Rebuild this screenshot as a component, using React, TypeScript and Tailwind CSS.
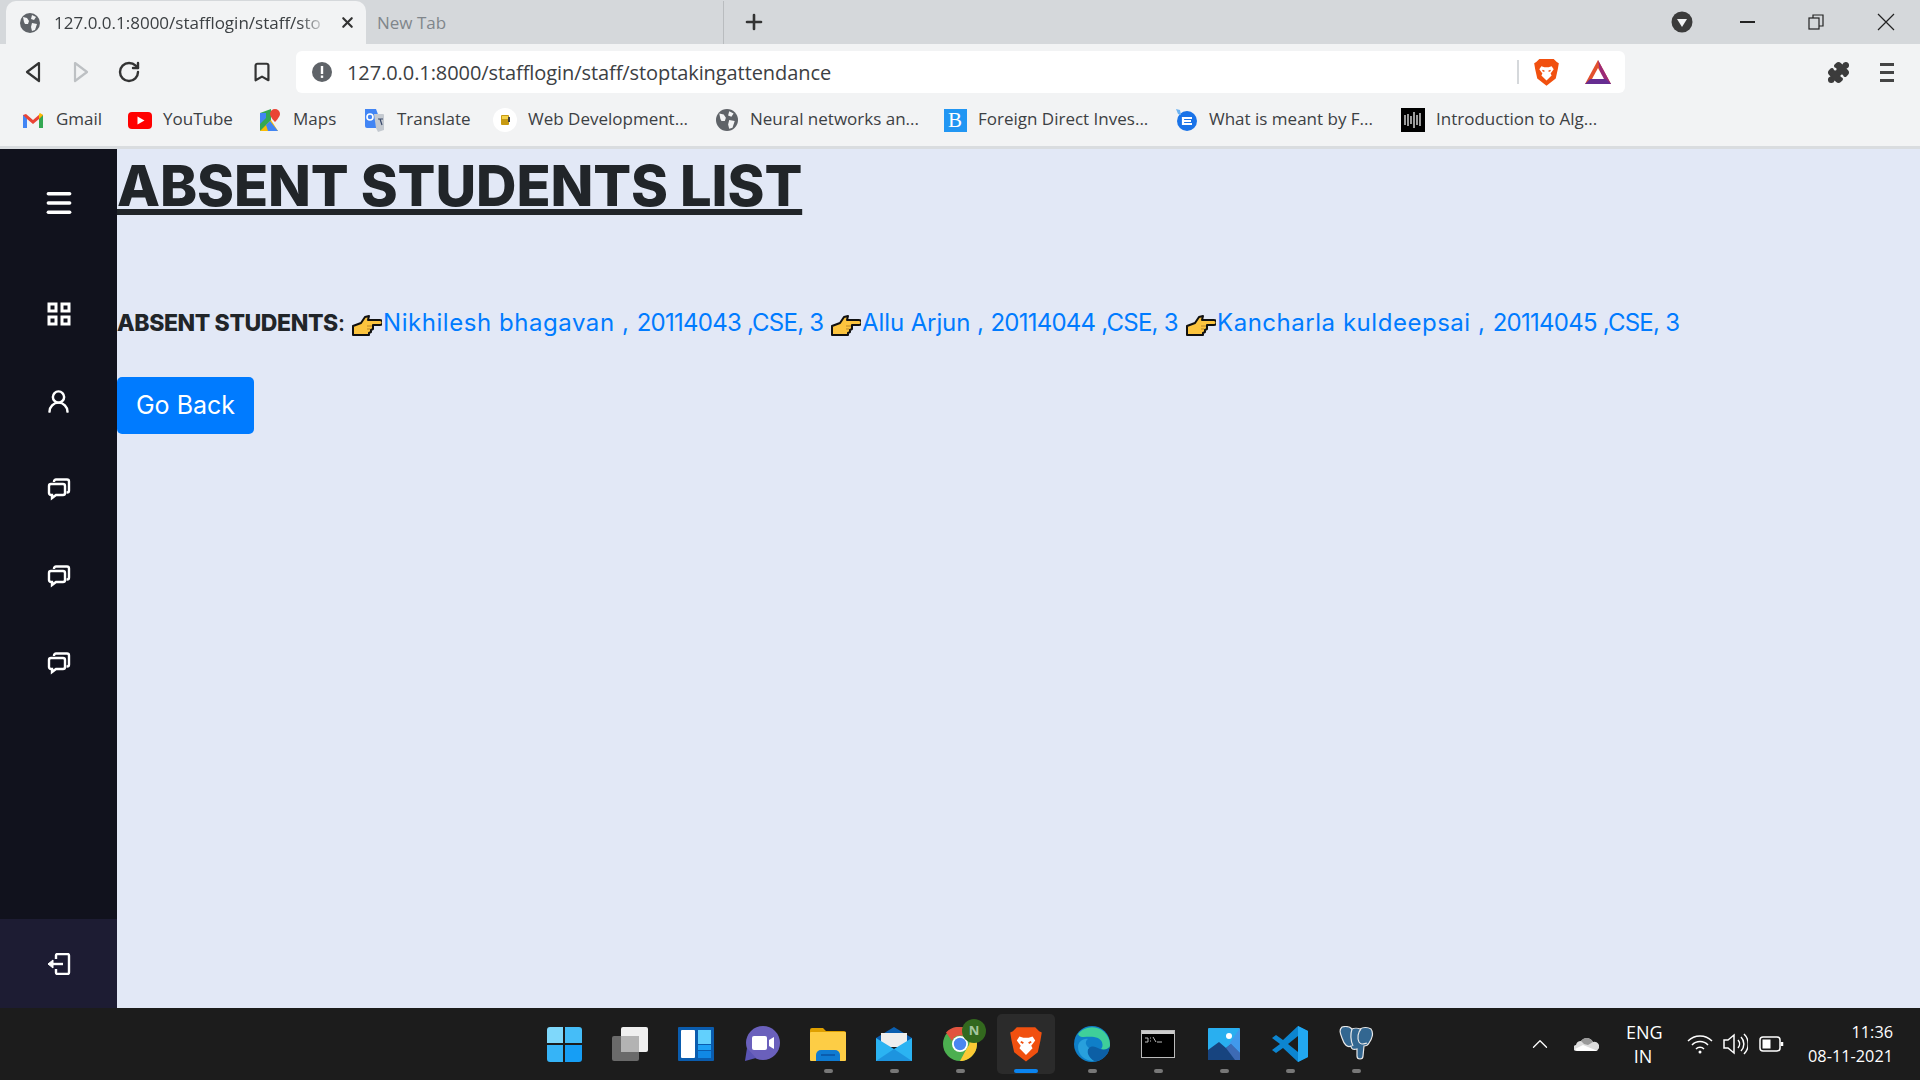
import { Menu, UserRound, ChevronUp, Plus, X, RotateCw, Bookmark, Puzzle } from 'lucide-react';

const uiFont = "font-['Open_Sans','Noto_Sans',sans-serif]";
const pageFont = "font-['Inter','Liberation_Sans',sans-serif]";

function Globe({ size = 20, color = '#5f6368' }: { size?: number; color?: string }) {
  return (
    <svg width={size} height={size} viewBox="0 0 20 20">
      <circle cx="10" cy="10" r="10" fill={color} />
      <path d="M3 4l4 1 2 3-1 3-3 0-1-2zM12 2l4 2-2 3-3-1zM12 10l5 1-2 6-3 1-1-4z" fill="#f2f3f4" />
    </svg>
  );
}

function Chats() {
  return (
    <svg width="24" height="24" viewBox="0 0 24 24" fill="none" stroke="#fff" strokeWidth="2.400">
      <path d="M7 5V4.500A2 2 0 0 1 9 2.500h11a2 2 0 0 1 2 2v9a2 2 0 0 1-2 2h-.5" />
      <path d="M4 7h12a2 2 0 0 1 2 2v7a2 2 0 0 1-2 2H9l-4 3v-3H4a2 2 0 0 1-2-2V9a2 2 0 0 1 2-2z" />
    </svg>
  );
}

function Hand() {
  return (
    <svg width="30" height="22" viewBox="0 0 30 22" className="block">
      <path
        d="M1 12l8-3 4-6 4-1-1 4h12a2.500 2.500 0 0 1 0 5h-7v4l-2 1v2l-2 1v2H1z"
        fill="#fcc43e"
        stroke="#111"
        strokeWidth="2"
        strokeLinejoin="round"
      />
      <path d="M15 12h5M15 15h3" stroke="#b8862a" strokeWidth="1" />
    </svg>
  );
}

function BraveLion({ size = 24 }: { size?: number }) {
  return (
    <svg width={size} height={size * 1.15} viewBox="0 0 24 28">
      <path d="M5 1h14l3 3 2 1-1 6-2 9-9 7-9-7-2-9-1-6 2-1z" fill="#f1500f" />
      <path d="M7 8l3 1h4l3-1 2 3-3 4 1 2-5 5-5-5 1-2-3-4z" fill="#fff" />
      <path d="M10 13l-2-1M14 13l2-1" stroke="#f1500f" strokeWidth="1.400" />
    </svg>
  );
}

function BookmarkItem({ icon, label, width }: { icon: React.ReactNode; label: string; width: string }) {
  return (
    <div className={`flex shrink-0 items-center ${width}`}>
      <div className="flex w-[24px] shrink-0 justify-center">{icon}</div>
      <span className="mt-[-2px] ml-[11px] text-[17px] whitespace-nowrap text-[#3c4043]">{label}</span>
    </div>
  );
}

const bookmarks = [
  {
    label: 'Gmail',
    width: 'w-[107px]',
    icon: (
      <svg width="22" height="17" viewBox="0 0 22 17">
        <path d="M1 16V3l3-1 7 6 7-6 3 1v13h-4V7l-6 5-6-5v9z" fill="#ea4335" />
        <path d="M1 3v13h4V7z" fill="#4285f4" />
        <path d="M21 3v13h-4V7z" fill="#34a853" />
        <path d="M17 7V2l1-1 3 2z" fill="#fbbc04" />
      </svg>
    ),
  },
  {
    label: 'YouTube',
    width: 'w-[130px]',
    icon: (
      <svg width="24" height="17" viewBox="0 0 24 17">
        <rect width="24" height="17" rx="4" fill="#f00" />
        <path d="M9.500 4.500v8l7-4z" fill="#fff" />
      </svg>
    ),
  },
  {
    label: 'Maps',
    width: 'w-[104px]',
    icon: (
      <svg width="22" height="24" viewBox="0 0 22 24">
        <path d="M1 5l11-4v19L1 23z" fill="#34a853" />
        <path d="M1 23l11-11 7 11z" fill="#fbbc04" />
        <path d="M1 5h6v5l-6 6z" fill="#4285f4" />
        <path d="M7 17l4-4 8 10H9z" fill="#4285f4" />
        <path d="M16 1a5 5 0 0 1 5 5c0 3-5 8-5 8s-5-5-5-8a5 5 0 0 1 5-5z" fill="#ea4335" />
      </svg>
    ),
  },
  {
    label: 'Translate',
    width: 'w-[131px]',
    icon: (
      <svg width="22" height="24" viewBox="0 0 22 24">
        <path d="M2 1h11l7 19H4a2 2 0 0 1-2-2z" fill="#4285f4" />
        <path d="M11 6h9a1 1 0 0 1 1 1v15l-6 2-2-4z" fill="#c4c9d0" />
        <circle cx="7" cy="9" r="3" fill="none" stroke="#fff" strokeWidth="1.600" />
        <path d="M15 11h5M17 11l2 6" stroke="#3a4a6b" strokeWidth="1.200" />
      </svg>
    ),
  },
  {
    label: 'Web Development...',
    width: 'w-[222px]',
    icon: (
      <svg width="24" height="24" viewBox="0 0 24 24">
        <circle cx="12" cy="12" r="12" fill="#fff" />
        <rect x="8" y="7" width="8" height="10" rx="1" fill="#c79a12" />
        <rect x="9" y="8" width="6" height="3" fill="#f5d24a" />
        <rect x="15" y="9" width="2" height="5" fill="#444" />
      </svg>
    ),
  },
  { label: 'Neural networks an...', width: 'w-[228px]', icon: <Globe size={22} /> },
  {
    label: 'Foreign Direct Inves...',
    width: 'w-[231px]',
    icon: (
      <div className="flex h-[23px] w-[23px] items-center justify-center bg-[#2196f3] font-['Liberation_Serif',serif] text-[21px] leading-none text-white">
        B
      </div>
    ),
  },
  {
    label: 'What is meant by F...',
    width: 'w-[227px]',
    icon: (
      <svg width="24" height="26" viewBox="0 0 24 26">
        <circle cx="13" cy="14" r="10" fill="#1a73e8" />
        <path d="M2 2l4 1 1 5-3-1z" fill="#6db3f2" />
        <path d="M18 11H9v6h9M9 14h8" fill="none" stroke="#fff" strokeWidth="2.200" />
      </svg>
    ),
  },
  {
    label: 'Introduction to Alg...',
    width: 'w-[220px]',
    icon: (
      <svg width="24" height="24" viewBox="0 0 24 24">
        <rect width="24" height="24" fill="#000" />
        <path d="M4 7v10M7 6v12M10 8v8M13 4v16M16 7v10M19 5v13" stroke="#ddd" strokeWidth="1.400" />
      </svg>
    ),
  },
];

function Chrome() {
  return (
    <div className={`${uiFont} shrink-0`}>
      {/* tab strip */}
      <div className="flex h-[44px] items-end bg-[#d5d8db] pl-[6px]">
        <div className="flex h-[43px] w-[360px] items-center rounded-t-[10px] bg-[#f2f3f4] pl-[14px]">
          <Globe size={20} />
          <span className="ml-[14px] w-[273px] overflow-hidden text-[17px] whitespace-nowrap text-[#3c4043] [mask-image:linear-gradient(to_right,black_90%,transparent)]">
            127.0.0.1:8000/stafflogin/staff/sto
          </span>
          <X size={17} strokeWidth={3} className="ml-[12px] text-[#333]" />
        </div>
        <div className="flex h-[43px] w-[358px] items-center border-r border-[#b9bcbf] pl-[11px] text-[17px] text-[#80868b]">
          New Tab
        </div>
        <Plus size={24} strokeWidth={2.600} className="mb-[10px] ml-[18px] text-[#333]" />
        <div className="ml-auto flex h-[44px] items-center self-start">
          <svg width="22" height="22" viewBox="0 0 22 22">
            <circle cx="11" cy="11" r="10.500" fill="#3b3b3b" />
            <path d="M6 8h10l-5 8z" fill="#f2f3f4" />
          </svg>
          <div className="ml-[47px] h-[2px] w-[15px] bg-[#222]" />
          <svg width="16" height="16" viewBox="0 0 16 16" fill="none" stroke="#222" strokeWidth="1.200" className="ml-[53px]">
            <rect x="1" y="4" width="10" height="11" />
            <path d="M5 4V1h10v11h-4" />
          </svg>
          <svg width="18" height="18" viewBox="0 0 18 18" stroke="#222" strokeWidth="1.200" className="mr-[25px] ml-[53px]">
            <path d="M1 1l16 16M17 1L1 17" />
          </svg>
        </div>
      </div>
      {/* toolbar */}
      <div className="flex h-[50px] items-center bg-[#f2f3f4] pt-[7px] pb-px">
        <svg width="18" height="22" viewBox="0 0 18 22" fill="none" stroke="#333" strokeWidth="2.200" strokeLinejoin="round" className="ml-[24px]">
          <path d="M15 2L3 11l12 9z" />
        </svg>
        <svg width="18" height="22" viewBox="0 0 18 22" fill="none" stroke="#bdc0c3" strokeWidth="2.200" strokeLinejoin="round" className="ml-[30px]">
          <path d="M3 2l12 9-12 9z" />
        </svg>
        <RotateCw size={24} strokeWidth={2.400} className="ml-[27px] text-[#333]" />
        <Bookmark size={22} strokeWidth={2.400} className="ml-[110px] text-[#333]" />
        <div className="ml-[23px] flex h-[42px] w-[1329px] items-center rounded-[6px] bg-white pl-[16px]">
          <svg width="20" height="20" viewBox="0 0 20 20">
            <circle cx="10" cy="10" r="10" fill="#5f6368" />
            <rect x="8.800" y="4" width="2.400" height="8" fill="#fff" />
            <rect x="8.800" y="13.500" width="2.400" height="2.400" fill="#fff" />
          </svg>
          <span className="mt-[2px] ml-[15px] text-[20px] tracking-[-0.08px] whitespace-nowrap text-[#3c4043]">
            127.0.0.1:8000/stafflogin/staff/stoptakingattendance
          </span>
          <div className="ml-auto flex items-center">
            <div className="h-[24px] w-[2px] bg-[#d5d8db]" />
            <div className="ml-[15px]">
              <BraveLion size={25} />
            </div>
            <svg width="28" height="24" viewBox="0 0 28 24" className="mr-[13px] ml-[25px]">
              <path d="M14 0l13 24H1z" fill="#e2502d" />
              <path d="M14 0l13 24h-9z" fill="#9b2a78" />
              <path d="M1 24l5-5h16l5 5z" fill="#662d91" />
              <path d="M14 8l6 11H8z" fill="#fff" />
            </svg>
          </div>
        </div>
        <Puzzle size={23} fill="#3c3c3c" className="ml-[202px] text-[#3c3c3c]" />
        <div className="ml-[30px] flex w-[14px] flex-col gap-[5px]">
          <div className="h-[3px] bg-[#444]" />
          <div className="h-[3px] bg-[#444]" />
          <div className="h-[3px] bg-[#444]" />
        </div>
      </div>
      {/* bookmarks bar */}
      <div className="flex h-[55px] items-center border-b-[3px] border-[#d9dcdf] bg-[#f2f3f4] pl-[21px]">
        {bookmarks.map((b) => (
          <BookmarkItem key={b.label} icon={b.icon} label={b.label} width={b.width} />
        ))}
      </div>
    </div>
  );
}

function Sidebar() {
  return (
    <div className="flex w-[117px] shrink-0 flex-col bg-[#11121d] text-white">
      <div className="flex flex-1 flex-col items-center pt-[38px]">
        <Menu size={32} strokeWidth={2.600} />
        <svg width="24" height="24" viewBox="0 0 24 24" fill="none" stroke="#fff" strokeWidth="3" className="mt-[83px]">
          <rect x="2" y="2" width="7" height="7" />
          <rect x="15" y="2" width="7" height="7" />
          <rect x="2" y="15" width="7" height="7" />
          <rect x="15" y="15" width="7" height="7" />
        </svg>
        <div className="mt-[62px]">
          <UserRound size={27} strokeWidth={2.200} />
        </div>
        <div className="mt-[62px] flex flex-col gap-[63px]">
          <Chats />
          <Chats />
          <Chats />
        </div>
      </div>
      <div className="flex h-[89px] items-center justify-center bg-[#1d1c33]">
        <svg width="24" height="22" viewBox="0 0 24 22" fill="none" stroke="#fff" strokeWidth="2.400">
          <path d="M9 6V2.500A1.500 1.500 0 0 1 10.500 1h10A1.500 1.500 0 0 1 22 2.500v17a1.500 1.500 0 0 1-1.500 1.500h-10A1.500 1.500 0 0 1 9 19.500V16" />
          <path d="M16 11H4" />
          <path d="M1 11l5-4v8z" fill="#fff" strokeWidth="1" />
        </svg>
      </div>
    </div>
  );
}

function Main() {
  return (
    <div className={`${pageFont} flex-1 bg-[#e2e8f6] text-[#212529]`}>
      <h1 className="mt-[2px] h-[67px] text-[56px] leading-[70px] font-extrabold tracking-[-0.1px] underline decoration-[6px] underline-offset-[3px]">
        ABSENT STUDENTS LIST
      </h1>
      <div className="mt-[87px] flex h-[36px] items-center text-[24px] whitespace-nowrap">
        <b className="w-[227px] text-[23px] font-extrabold tracking-[-0.4px]">
          ABSENT STUDENTS<span className="font-medium">:</span>
        </b>
        <span className="ml-[8px] flex items-center text-[#007bff]">
          <span className="mt-[4px]"><Hand /></span>
          <span className="ml-[1px] w-[442px]">
            <span className="tracking-[0.55px]">Nikhilesh bhagavan , </span>
            <span className="tracking-[-0.75px]">20114043 ,CSE, 3</span>
          </span>
          <span className="mt-[4px] ml-[6px]"><Hand /></span>
          <span className="ml-[1px] w-[314px]">
            <span className="tracking-[-0.1px]">Allu Arjun , </span>
            <span className="tracking-[-0.75px]">20114044 ,CSE, 3</span>
          </span>
          <span className="mt-[4px] ml-[10px]"><Hand /></span>
          <span className="ml-[1px]">
            <span className="tracking-[0.53px]">Kancharla kuldeepsai , </span>
            <span className="tracking-[-0.75px]">20114045 ,CSE, 3</span>
          </span>
        </span>
      </div>
      <button className="mt-[36px] h-[57px] w-[137px] rounded-[5px] bg-[#007bff] text-[25px] text-white">Go Back</button>
    </div>
  );
}

function Dot({ active }: { active?: boolean }) {
  return <div className={active ? 'h-[4px] w-[24px] rounded-full bg-[#0a84f0]' : 'h-[4px] w-[9px] rounded-full bg-[#777]'} />;
}

const taskIcons: { dot?: boolean; active?: boolean; icon: React.ReactNode }[] = [
  {
    icon: (
      <div className="grid h-[35px] w-[35px] grid-cols-2 gap-[2px]">
        <div className="rounded-tl-[3px] bg-[#7fd8fb]" />
        <div className="rounded-tr-[3px] bg-[#45bdf8]" />
        <div className="rounded-bl-[3px] bg-[#36b4f7]" />
        <div className="rounded-br-[3px] bg-[#169ef5]" />
      </div>
    ),
  },
  {
    icon: (
      <svg width="36" height="34" viewBox="0 0 36 34">
        <rect x="9" y="0" width="27" height="25" rx="2" fill="#efefef" />
        <rect x="0" y="9" width="27" height="25" rx="2" fill="#6a6a6a" />
        <rect x="9" y="9" width="18" height="16" fill="#b3b3b3" />
      </svg>
    ),
  },
  {
    icon: (
      <svg width="36" height="34" viewBox="0 0 36 34">
        <rect width="36" height="34" rx="1" fill="#0a5cae" />
        <rect x="3" y="3" width="14" height="28" rx="1" fill="#fff" />
        <rect x="20" y="3" width="13" height="14" fill="#62d0fd" />
        <rect x="20" y="18" width="13" height="5" fill="#1da1f5" />
        <rect x="20" y="24" width="13" height="7" fill="#1088e5" />
      </svg>
    ),
  },
  {
    icon: (
      <svg width="36" height="36" viewBox="0 0 36 36">
        <circle cx="19" cy="17" r="17" fill="#6a60bc" />
        <path d="M3 22l-2 13 11-3z" fill="#5a54b4" />
        <rect x="8" y="10" width="15" height="14" rx="2" fill="#fff" />
        <path d="M25 14l5-3v12l-5-3z" fill="#fff" />
      </svg>
    ),
  },
  {
    dot: true,
    icon: (
      <svg width="36" height="33" viewBox="0 0 36 33">
        <path d="M0 2a2 2 0 0 1 2-2h11l3 3h18a2 2 0 0 1 2 2v6H0z" fill="#dfa000" />
        <rect y="4" width="36" height="29" rx="1" fill="#fdcd45" />
        <path d="M6 33v-6a5 5 0 0 1 5-5h14a5 5 0 0 1 5 5v6z" fill="#0f7bd2" />
        <rect x="11" y="26" width="14" height="2" fill="#0a5cae" />
      </svg>
    ),
  },
  {
    dot: true,
    icon: (
      <svg width="36" height="34" viewBox="0 0 36 34">
        <path d="M0 11L18 0l18 11v5H0z" fill="#0b5fb0" />
        <path d="M5 6h26v14H5z" fill="#eee" />
        <path d="M0 11l18 11 18-11v23H0z" fill="#2bb3f2" />
        <path d="M36 34H0l18-12 18 12z" fill="#1d94df" />
      </svg>
    ),
  },
  {
    dot: true,
    icon: (
      <div className="relative">
        <svg width="34" height="34" viewBox="0 0 34 34">
          <circle cx="17" cy="17" r="17" fill="#4caf50" />
          <path d="M17 0a17 17 0 0 1 14.700 8.500H17a8.500 8.500 0 0 0-8 5.500L3 5.500A17 17 0 0 1 17 0z" fill="#e2533f" />
          <path d="M31.700 8.500A17 17 0 0 1 17 34l7-13a8.500 8.500 0 0 0 0-12.500z" fill="#fcc934" />
          <circle cx="17" cy="17" r="8" fill="#fff" />
          <circle cx="17" cy="17" r="6.200" fill="#4a86f0" />
        </svg>
        <div className="absolute top-[-8px] left-[19px] flex h-[24px] w-[24px] items-center justify-center rounded-full bg-[#33691e] text-[13px] font-bold text-[#a7c7a0]">
          N
        </div>
      </div>
    ),
  },
  { active: true, icon: <BraveLion size={32} /> },
  {
    dot: true,
    icon: (
      <svg width="36" height="36" viewBox="0 0 36 36">
        <circle cx="18" cy="18" r="18" fill="#0f7fc8" />
        <path d="M4 8A18 18 0 0 1 36 19c0 4-5 6-9 4 3-3 2-11-7-12C12 10 6 13 4 8z" fill="#3fcf9a" />
        <path d="M36 19c0 3-5 6-10 4-5-2-7-4-11-1-3 3-1 9 5 13 4 1 10-2 14-8z" fill="#0c5fa5" />
        <path d="M15 22c-3 3-1 9 5 13-9 0-16-6-16-14 0-5 5-9 10-8-3 2-3 6 1 9z" fill="#28a0dc" />
      </svg>
    ),
  },
  {
    dot: true,
    icon: (
      <svg width="34" height="28" viewBox="0 0 34 28">
        <rect x="0.500" y="0.500" width="33" height="27" fill="#000" stroke="#bbb" />
        <rect x="1" y="1" width="32" height="3" fill="#ccc" />
        <path d="M4 8h3v4H4M9 8h1M9 11h1M12 7l3 5M16 12h5" stroke="#bbb" strokeWidth="1" fill="none" />
      </svg>
    ),
  },
  {
    dot: true,
    icon: (
      <svg width="32" height="32" viewBox="0 0 32 32">
        <rect width="32" height="32" rx="1" fill="#29aff0" />
        <path d="M32 32H0V22l11-8 7 6 5-4 9 9z" fill="#17447f" />
        <path d="M18 20l5-4 9 9v7h-5z" fill="#3d6bb5" />
        <circle cx="21" cy="8" r="3" fill="#fff" />
        <path d="M32 0v25l-9-9-3 2z" fill="#5a84e6" opacity=".5" />
      </svg>
    ),
  },
  {
    dot: true,
    icon: (
      <svg width="36" height="36" viewBox="0 0 36 36">
        <path d="M26 0l10 5v26l-10 5-15-14-7 5-4-3 8-6-8-6 4-3 7 5z" fill="#0c85d0" />
        <path d="M26 0l10 5v26l-10 5z" fill="#22a8f2" />
        <path d="M26 10v16l-10-8z" fill="#1c1c1c" />
      </svg>
    ),
  },
  {
    dot: true,
    icon: (
      <svg width="36" height="36" viewBox="0 0 36 36" stroke="#e8e8e8" strokeWidth="1.200">
        <path d="M4 1c4-1 8 0 10 2 2-1 6-1 8 0 3-2 8-2 11 0 3 4 1 10-2 14-1 2-3 3-5 3l-1 10c0 4-6 4-6 0v-7c-4 1-6 0-6-3-4 2-7-2-9-8C2 7 1 4 4 1z" fill="#336791" />
        <path d="M14 3c-2 6-2 10 1 17M23 3c-3 3-4 9-2 13 2 3 4 2 8 1" fill="none" />
      </svg>
    ),
  },
];

function Taskbar() {
  return (
    <div className={`${uiFont} relative flex h-[72px] shrink-0 items-center bg-[#1c1c1c] text-white`}>
      <div className="ml-[531px] flex">
        {taskIcons.map((t, i) => (
          <div key={i} className="relative flex h-[60px] w-[66px] items-center justify-center">
            <div className={`flex h-[60px] w-[58px] items-center justify-center rounded-[5px] ${t.active ? 'bg-[#2b2b2b]' : ''}`}>
              {t.icon}
            </div>
            <div className="absolute bottom-[1px]">{(t.dot || t.active) && <Dot active={t.active} />}</div>
          </div>
        ))}
      </div>
      <div className="ml-auto flex items-center pr-[27px]">
        <ChevronUp size={26} strokeWidth={1.200} />
        <svg width="25" height="16" viewBox="0 0 25 16" className="ml-[21px]">
          <path d="M3 15a3 3 0 0 1-1-6 5 5 0 0 1 5-4 7 7 0 0 1 12 1 4.500 4.500 0 0 1 3 9z" fill="#ddd" />
          <path d="M1 13l8-4 5 2 10 4H3z" fill="#fff" />
          <path d="M7 5a7 7 0 0 1 12 1l-5 3-4-1z" fill="#999" />
        </svg>
        <div className="ml-[27px] w-[34px] text-center text-[18px] leading-[24px]">
          ENG
          <br />
          IN
        </div>
        <svg width="26" height="20" viewBox="0 0 26 20" fill="none" stroke="#fff" strokeWidth="1.500" className="ml-[27px]">
          <path d="M1 7a17 17 0 0 1 24 0M5 11a11 11 0 0 1 16 0M9 15a5.500 5.500 0 0 1 8 0" />
          <circle cx="13" cy="18" r="1.500" fill="#fff" stroke="none" />
        </svg>
        <svg width="25" height="22" viewBox="0 0 25 22" fill="none" stroke="#fff" strokeWidth="1.500" className="ml-[10px]">
          <path d="M1 7h4l6-5v18l-6-5H1z" />
          <path d="M15 7a6 6 0 0 1 0 8M18 4a10 10 0 0 1 0 14M21 1a14 14 0 0 1 0 20" />
        </svg>
        <svg width="25" height="16" viewBox="0 0 25 16" fill="none" stroke="#fff" strokeWidth="1.500" className="ml-[11px]">
          <rect x="1" y="1" width="20" height="14" rx="3" />
          <rect x="3.500" y="3.500" width="8" height="9" fill="#fff" stroke="none" />
          <path d="M23 6v4" strokeWidth="2.500" />
        </svg>
        <div className="ml-[24px] text-right text-[16.3px] leading-[24px]">
          <div>11:36</div>
          <div>08-11-2021</div>
        </div>
      </div>
    </div>
  );
}

export default function App() {
  return (
    <div className="flex h-[1080px] w-[1920px] flex-col overflow-hidden">
      <Chrome />
      <div className="flex min-h-0 flex-1">
        <Sidebar />
        <Main />
      </div>
      <Taskbar />
    </div>
  );
}
